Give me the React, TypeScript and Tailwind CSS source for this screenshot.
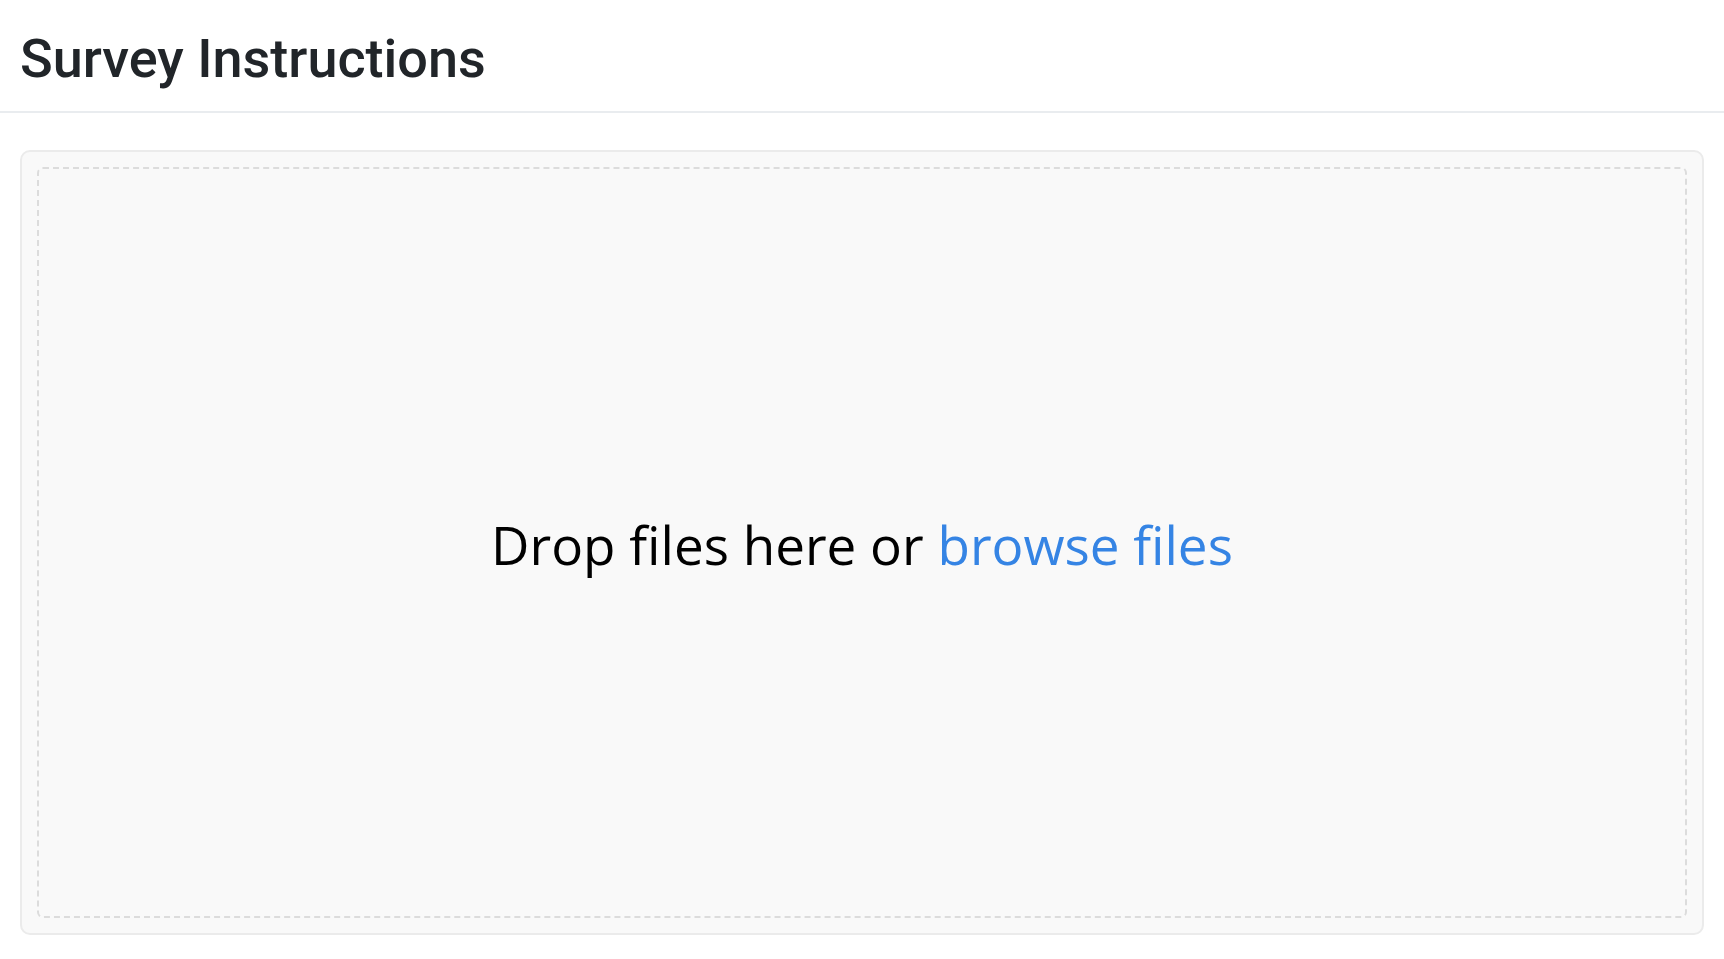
export default function App() {
  return (
    <div className="min-h-screen bg-white">
      <header className="border-b-2 border-[#e9ecef] px-5 pt-[22px] pb-[15px]">
        <h1
          className="text-[54px] leading-[74px] font-medium text-[#212529]"
          style={{ fontFamily: "Roboto, 'Liberation Sans', sans-serif" }}
        >
          Survey Instructions
        </h1>
      </header>
      <main className="px-5 pt-[37px]">
        <div className="rounded-[10px] border-2 border-[#ebebeb] bg-[#f9f9f9] p-[15px]">
          <div className="flex h-[751px] items-center justify-center rounded-md border-2 border-dashed border-[#dcdcdc]">
            <p
              className="pt-[5px] text-[53px] text-black"
              style={{ fontFamily: "'Open Sans', 'Noto Sans', sans-serif" }}
            >
              Drop files here or{" "}
              <button className="cursor-pointer text-[#3584e4]">browse files</button>
            </p>
          </div>
        </div>
      </main>
    </div>
  );
}
